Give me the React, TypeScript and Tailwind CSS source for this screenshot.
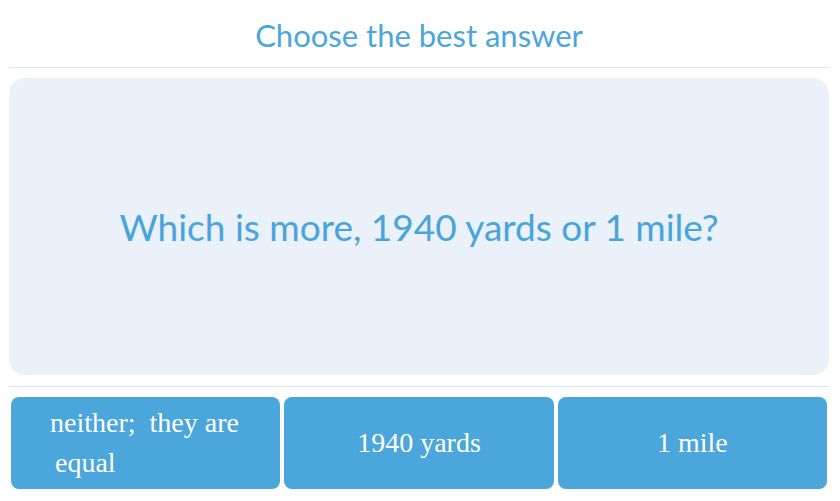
export default function App() {
  const options = ["1940 yards", "1 mile"];

  return (
    <div className="w-[840px] h-[501px] bg-white pl-[9px] pr-[11px] font-['Lato',sans-serif]">
      <div className="h-[68px] border-b border-[#dfe3ea] flex items-center justify-center">
        <h1 className="text-[31px] leading-none text-[#4aa6dc] pt-[3px]">Choose the best answer</h1>
      </div>

      <div className="mt-[10px] h-[297px] rounded-[16px] bg-[#eaf1f9] flex items-center justify-center">
        <p className="text-[37px] leading-none text-[#48a4dc]">Which is more, 1940 yards or 1 mile?</p>
      </div>

      <div className="mt-[11px] border-t border-[#dde4ee] pt-[10px] px-[2px] grid grid-cols-3 gap-[4px]">
        <button className="h-[92px] rounded-[8px] bg-[#4aa6db] text-white text-[28px] leading-[40px] font-['Liberation_Serif',serif] text-left pl-[39px]">
          <span className="block whitespace-pre">neither;  they are</span>
          <span className="block pl-[5px]">equal</span>
        </button>
        {options.map((o) => (
          <button
            key={o}
            className="h-[92px] rounded-[8px] bg-[#4aa6db] text-white text-[28px] font-['Liberation_Serif',serif]"
          >
            {o}
          </button>
        ))}
      </div>
    </div>
  );
}
